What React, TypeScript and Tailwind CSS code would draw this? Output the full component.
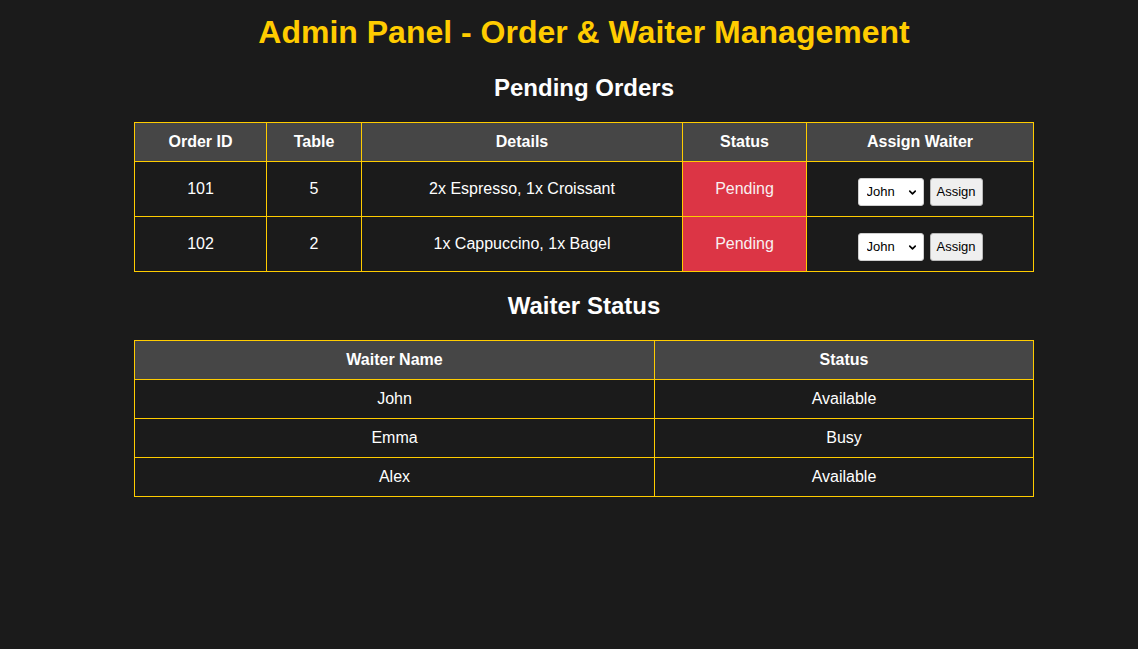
import { ChevronDown } from "lucide-react"

const orders = [
  { id: "101", table: "5", details: "2x Espresso, 1x Croissant" },
  { id: "102", table: "2", details: "1x Cappuccino, 1x Bagel" },
]

const waiters = [
  { name: "John", status: "Available" },
  { name: "Emma", status: "Busy" },
  { name: "Alex", status: "Available" },
]

function WaiterSelect() {
  return (
    <div className="flex items-center justify-center gap-[6px] pt-[5px]">
      <div className="relative">
        <select className="h-[28px] w-[66px] appearance-none rounded-[3px] border border-[#cfcfcf] bg-white pl-[8px] text-[13px] text-black">
          <option>John</option>
          <option>Emma</option>
          <option>Alex</option>
        </select>
        <ChevronDown
          className="pointer-events-none absolute right-[6px] top-[9px] h-[11px] w-[11px] text-black"
          strokeWidth={3.5}
        />
      </div>
      <button className="h-[28px] w-[53px] rounded-[3px] border border-[#b8b8b8] bg-[#efefef] text-[13px] text-black">
        Assign
      </button>
    </div>
  )
}

export default function App() {
  return (
    <div className="min-h-[649px] bg-[#1b1b1b] pl-[30px] pt-[14px] font-['Liberation_Sans',Arial,sans-serif] text-white">
      <div className="text-center">
        <h1 className="text-[32px] font-bold leading-[37px] text-[#ffcc00]">
          Admin Panel - Order &amp; Waiter Management
        </h1>

        <h2 className="mt-[23px] text-[24px] font-bold leading-[28px]">Pending Orders</h2>
        <table className="mx-auto mt-[20px] w-[899px] table-fixed border-collapse text-[16px]">
          <colgroup>
            <col className="w-[132px]" />
            <col className="w-[95px]" />
            <col className="w-[321px]" />
            <col className="w-[124px]" />
            <col className="w-[227px]" />
          </colgroup>
          <thead>
            <tr className="h-[39px] bg-[#464646]">
              {["Order ID", "Table", "Details", "Status", "Assign Waiter"].map((h) => (
                <th key={h} className="border border-[#ffcc00] p-0 font-bold">
                  {h}
                </th>
              ))}
            </tr>
          </thead>
          <tbody>
            {orders.map((o) => (
              <tr key={o.id} className="h-[55px]">
                <td className="border border-[#ffcc00] p-0">{o.id}</td>
                <td className="border border-[#ffcc00] p-0">{o.table}</td>
                <td className="border border-[#ffcc00] p-0">{o.details}</td>
                <td className="border border-[#ffcc00] bg-[#dc3545] p-0 text-[#f8f0f1]">Pending</td>
                <td className="border border-[#ffcc00] p-0">
                  <WaiterSelect />
                </td>
              </tr>
            ))}
          </tbody>
        </table>

        <h2 className="mt-[20px] text-[24px] font-bold leading-[28px]">Waiter Status</h2>
        <table className="mx-auto mt-[20px] w-[899px] table-fixed border-collapse text-[16px]">
          <colgroup>
            <col className="w-[520px]" />
            <col className="w-[379px]" />
          </colgroup>
          <thead>
            <tr className="h-[39px] bg-[#464646]">
              <th className="border border-[#ffcc00] p-0 font-bold">Waiter Name</th>
              <th className="border border-[#ffcc00] p-0 font-bold">Status</th>
            </tr>
          </thead>
          <tbody>
            {waiters.map((w) => (
              <tr key={w.name} className="h-[39px]">
                <td className="border border-[#ffcc00] p-0">{w.name}</td>
                <td className="border border-[#ffcc00] p-0">{w.status}</td>
              </tr>
            ))}
          </tbody>
        </table>
      </div>
    </div>
  )
}
